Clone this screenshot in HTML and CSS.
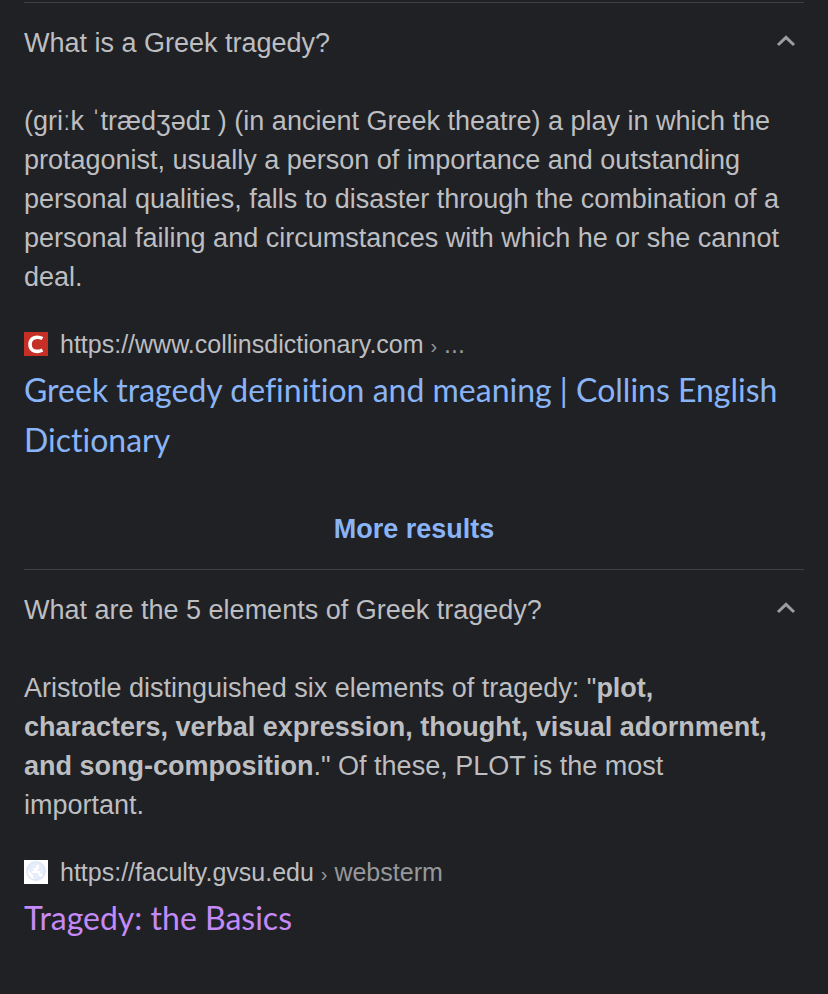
FILE: index.html
```html
<!DOCTYPE html>
<html lang="en">

<head>
    <meta charset="UTF-8">
    <meta name="viewport" content="width=device-width, initial-scale=1.0">
    <title>People also ask</title>
    <link rel="stylesheet" href="styles.css">
</head>

<body>
    <main class="questions">
        <section class="question">
            <button class="question-toggle" aria-expanded="true">
                <span>What is a Greek tragedy?</span>
                <svg class="chevron" viewBox="0 0 20 12" aria-hidden="true">
                    <path d="M2 10 10 2.4 18 10" />
                </svg>
            </button>
            <p class="answer">(griːk ˈtrædʒədɪ ) (in ancient Greek theatre) a play in which the protagonist, usually a person of importance and outstanding personal qualities, falls to disaster through the combination of a personal failing and circumstances with which he or she cannot deal.</p>
            <a class="result" href="#">
                <span class="source">
                    <svg class="favicon" viewBox="0 0 24 24" aria-hidden="true">
                        <rect width="24" height="24" fill="#c62f25" />
                        <path d="M18.500 6.500C12.500 3.500 6 6 6 12.500S12.500 21 18.500 18" fill="none" stroke="#fff" stroke-width="3.600" />
                    </svg>
                    <span class="url">https://www.collinsdictionary.com <span class="crumb"><span class="arrow">›</span> ...</span></span>
                </span>
                <span class="title">Greek tragedy definition and meaning | Collins English Dictionary</span>
            </a>
            <a class="more" href="#">More results</a>
        </section>
        <section class="question">
            <button class="question-toggle" aria-expanded="true">
                <span>What are the 5 elements of Greek tragedy?</span>
                <svg class="chevron" viewBox="0 0 20 12" aria-hidden="true">
                    <path d="M2 10 10 2.4 18 10" />
                </svg>
            </button>
            <p class="answer">Aristotle distinguished six elements of tragedy: "<b>plot, characters, verbal expression, thought, visual adornment, and song-composition</b>." Of these, PLOT is the most important.</p>
            <a class="result" href="#">
                <span class="source">
                    <svg class="favicon" viewBox="0 0 24 24" aria-hidden="true">
                        <rect width="24" height="24" fill="#fff" />
                        <circle cx="12" cy="11" r="9" fill="#e6edfb" stroke="#dfe7f8" stroke-width="2" />
                        <path d="M4 10 9 15 9 17 11 19C7 19 3 15 4 10ZM9 8H12V5H15V8L13 10V11H16V14H19L17 17 14 15V13H8V11H10Z" fill="#fff" />
                    </svg>
                    <span class="url">https://faculty.gvsu.edu <span class="crumb"><span class="arrow">›</span> websterm</span></span>
                </span>
                <span class="title visited">Tragedy: the Basics</span>
            </a>
        </section>
    </main>
</body>

</html>
```

FILE: styles.css
```css
* {
    box-sizing: border-box;
}

body {
    margin: 0;
    background-color: #202124;
    color: #bdbec1;
    font-family: "Liberation Sans", Arial, sans-serif;
}

.questions {
    padding: 2px 24px;
}

.question {
    display: flex;
    flex-direction: column;
    border-top: 1px solid #3c4043;
}

.question-toggle {
    display: flex;
    justify-content: space-between;
    align-items: center;
    height: 80px;
    padding: 0 8px 0 0;
    border: none;
    background: none;
    color: inherit;
    font: inherit;
    font-size: 27px;
    text-align: left;
    cursor: pointer;
}

.chevron {
    width: 20px;
    height: 12px;
    margin-bottom: 4px;
    fill: none;
    stroke: #9b9da0;
    stroke-width: 3;
}

.answer {
    margin: 19px 0 32px;
    padding-right: 20px;
    font-size: 27px;
    line-height: 39px;
}

.result {
    color: #8ab4f8;
    text-decoration: none;
}

.source {
    display: flex;
    align-items: center;
    gap: 12px;
    height: 30px;
    color: #bdbec1;
    font-size: 25px;
}

.favicon {
    width: 24px;
    height: 24px;
}

.crumb {
    color: #96989c;
}

.arrow {
    font-size: 20px;
}

.title {
    display: block;
    margin-top: 6px;
    font-family: Lato, sans-serif;
    font-size: 32px;
    font-variant-ligatures: none;
    line-height: 50px;
}

.visited {
    color: #c58af9;
}

.more {
    padding: 48px 0 24px;
    color: #8ab4f8;
    font-size: 27px;
    font-weight: bold;
    line-height: 32px;
    text-align: center;
    text-decoration: none;
}
```
